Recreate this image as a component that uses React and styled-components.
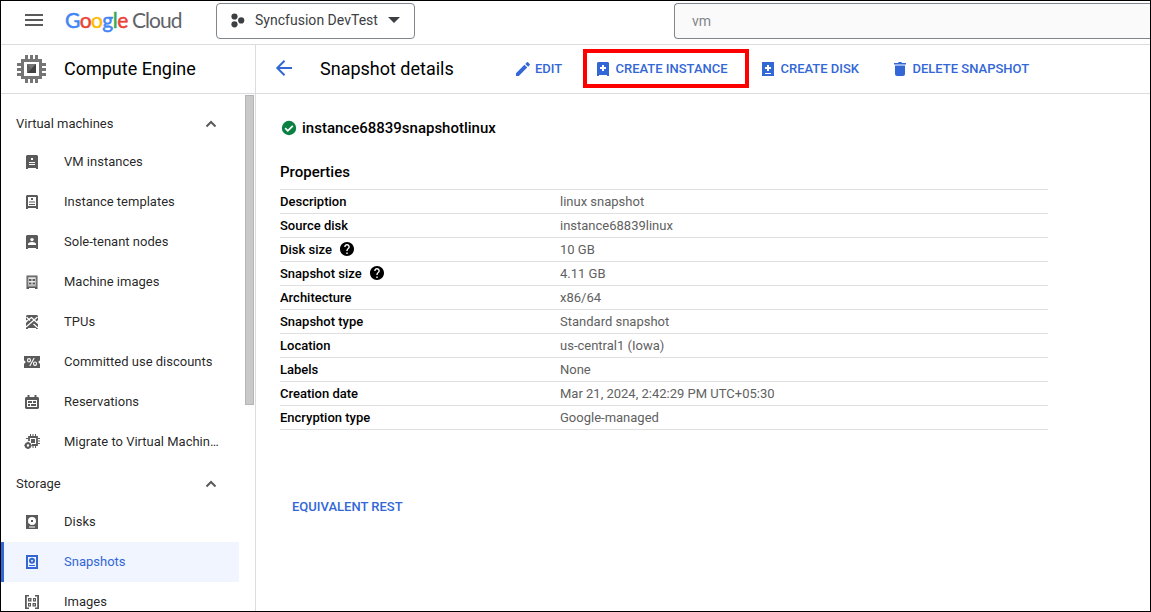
import React from "react";
import styled, { createGlobalStyle, css } from "styled-components";

const Global = createGlobalStyle`
  * { box-sizing: border-box; }
  body { margin: 0; background: #fff; }
`;

const BLUE = "#3367d6";
const LINE = "#dadce0";

const Frame = styled.div`
  width: 1151px;
  height: 612px;
  border: 1px solid #000;
  background: #fff;
  overflow: hidden;
  display: flex;
  flex-direction: column;
  font-family: Roboto, "Liberation Sans", sans-serif;
  color: rgba(0, 0, 0, 0.87);
  svg { display: block; flex: none; }
`;

const TopBar = styled.header`
  height: 44px;
  flex: none;
  display: flex;
  align-items: flex-start;
  border-bottom: 1px solid ${LINE};
`;

const MenuButton = styled.div`
  width: 18px;
  margin: 12px 0 0 24px;
`;

const Logo = styled.div`
  display: flex;
  width: 151px;
  margin: 4px 0 0 22px;
  font: 400 21px/30px Lato, sans-serif;
  white-space: pre;
`;

const Google = styled.span`
  width: 67px;
  letter-spacing: -0.55px;
  -webkit-text-stroke: 0.5px;
`;

const Cloud = styled.span`
  color: #5f6368;
  letter-spacing: -0.98px;
`;

const Letter = styled.span`
  color: ${(p) => p.$c};
`;

const ProjectPicker = styled.div`
  width: 199px;
  height: 36px;
  margin-top: 2px;
  padding: 0 14px 2px 12px;
  display: flex;
  align-items: center;
  border: 1px solid #80868b;
  border-radius: 4px;
  font-size: 14px;
  color: #3c4043;
`;

const ProjectName = styled.span`
  flex: 1;
  margin-left: 8px;
  letter-spacing: 0.02px;
`;

const Search = styled.div`
  flex: 1;
  height: 36px;
  margin: 2px 0 0 259px;
  padding: 0 17px;
  display: flex;
  align-items: center;
  background: #fafafa;
  border: 1px solid #80868b;
  border-right: 0;
  border-radius: 4px 0 0 4px;
  font-size: 14px;
  color: #80868b;
`;

const Body = styled.div`
  flex: 1;
  min-height: 0;
  display: flex;
`;

const Sidebar = styled.aside`
  width: 255px;
  flex: none;
  border-right: 1px solid ${LINE};
  display: flex;
  flex-direction: column;
`;

const Product = styled.div`
  height: 49px;
  flex: none;
  display: flex;
  align-items: center;
  gap: 17px;
  padding-left: 15px;
  border-bottom: 1px solid ${LINE};
  font-size: 18px;
  color: #000;
`;

const Raised = styled.span`
  padding-bottom: 2px;
`;

const NavScroll = styled.div`
  flex: 1;
  min-height: 0;
  display: flex;
  overflow: hidden;
`;

const NavList = styled.nav`
  width: 238px;
  padding-top: 8px;
  margin-right: 6px;
`;

const ScrollThumb = styled.div`
  width: 9px;
  height: 310px;
  margin-top: 1px;
  background: #c9c9c9;
  border: 1px solid #b4b4b4;
`;

const NavGroup = styled.div`
  height: 40px;
  padding: 3px 22px 0 15px;
  display: flex;
  align-items: center;
  justify-content: space-between;
  font-size: 13px;
`;

const NavItem = styled.div`
  height: 40px;
  display: flex;
  align-items: center;
  gap: 23px;
  padding-left: 22px;
  font-size: 13px;
  white-space: nowrap;
  svg { fill: #5a5a5a; stroke: none; color: #5a5a5a; }
  ${(p) => p.$active && css`
    padding-left: 19px;
    border-left: 3px solid ${BLUE};
    background: #f0f5ff;
    color: ${BLUE};
    svg { fill: ${BLUE}; color: ${BLUE}; }
  `}
`;

const Main = styled.main`
  flex: 1;
  min-width: 0;
`;

const Toolbar = styled.div`
  height: 49px;
  display: flex;
  align-items: center;
  border-bottom: 1px solid ${LINE};
`;

const BackButton = styled.div`
  width: 64px;
  padding: 0 0 2px 19px;
`;

const Title = styled.h1`
  width: 182px;
  margin: 0;
  padding-bottom: 2px;
  font-size: 18px;
  font-weight: 400;
  color: #000;
`;

const ToolButton = styled.div`
  width: ${(p) => p.$w}px;
  height: 39px;
  padding-left: ${(p) => p.$pad ?? 11}px;
  align-self: flex-start;
  margin-top: 4px;
  box-shadow: ${(p) => (p.$marked ? "inset 0 0 0 4px #f00" : "none")};
  display: flex;
  gap: ${(p) => p.$gap ?? 3.5}px;
  font-size: 13px;
  line-height: 40px;
  font-weight: 500;
  color: ${BLUE};
  white-space: nowrap;
  svg { fill: ${BLUE}; margin-top: 11px; }
`;

const Content = styled.div`
  padding: 24px 0 0 24px;
`;

const Name = styled.div`
  height: 20px;
  display: flex;
  align-items: center;
  gap: 5px;
  font-size: 15px;
  font-weight: 500;
  color: #000;
`;

const SectionTitle = styled.h2`
  margin: 24px 0 7px;
  font-size: 15px;
  line-height: 20px;
  font-weight: 500;
  color: #000;
`;

const Properties = styled.dl`
  width: 768px;
  margin: 0;
  border-bottom: 1px solid #e0e0e0;
`;

const Property = styled.div`
  height: 24px;
  display: flex;
  align-items: center;
  border-top: 1px solid #e0e0e0;
  font-size: 13px;
`;

const Term = styled.dt`
  width: 280px;
  height: 15px;
  display: flex;
  align-items: center;
  gap: 7px;
  line-height: 15px;
  font-weight: 500;
  color: #000;
  svg { margin-bottom: 1px; }
`;

const Value = styled.dd`
  margin: 0;
  color: #616161;
`;

const RestLink = styled.div`
  margin: 67px 0 0 12px;
  font-size: 13px;
  line-height: 20px;
  font-weight: 500;
  color: ${BLUE};
`;

const Icon = ({ children }) => (
  <svg width="18" height="18" viewBox="0 0 18 18">{children}</svg>
);

const SERVER = "M4 2h10l1 1v13h-2v-1H5v1H3V3z";

const icons = {
  vm: (
    <Icon>
      <path d={SERVER} />
      <path fill="#fff" d="M8 5h2v2H8zM6 9h6v1H6zM6 11h6v1H6z" />
    </Icon>
  ),
  template: (
    <Icon>
      <path fillRule="evenodd" d={SERVER + "M5 4v9h8V4z"} />
      <path d="M8 5h2v2H8zM6 8.500h6v1H6zM6 11h6v1H6z" />
    </Icon>
  ),
  sole: (
    <Icon>
      <path d={SERVER} />
      <circle cx="9" cy="6.600" r="1.700" fill="#fff" />
      <path fill="#fff" d="M5 12v-1c0-1.300 2-2 4-2s4 .7 4 2v1z" />
    </Icon>
  ),
  machine: (
    <Icon>
      <path d="M3.500 2.500h11V16h-2.500v-1H6v1H3.500z" />
      <path fill="#8a8a8a" d="M4.500 3.500h9v10.500h-9z" />
      <path fill="#eee" d="M5.500 4.500h7v8h-7z" />
      <path d="M6 6h2.500v2H6zM9.500 6H12v2H9.500zM6 9.500h2.500v2H6zM9.500 9.500H12v2H9.500z" />
    </Icon>
  ),
  tpu: (
    <Icon>
      <path d={SERVER} />
      <path d="M3 8.500 8.500 4.500 15 10.500M3.500 4l3.500 3.500M3 14 14.500 4M10.500 11l4.500 4" stroke="#fff" strokeWidth="1.200" fill="none" />
      <path fill="#fff" d="M3 7l1.500 1.500L3 10zM15 7l-1.500 1.500L15 10z" />
    </Icon>
  ),
  percent: (
    <Icon>
      <path d="M1 3h16v4.500a1.500 1.500 0 0 0 0 3V15H1v-4.500a1.500 1.500 0 0 0 0-3z" />
      <g fill="none" stroke="#fff" strokeWidth="1.100">
        <ellipse cx="6" cy="7.300" rx="1.500" ry="1.700" />
        <ellipse cx="12" cy="10.700" rx="1.500" ry="1.700" />
        <path d="M11.200 5 6.800 13" />
      </g>
    </Icon>
  ),
  calendar: (
    <Icon>
      <path fillRule="evenodd" d="M4.500 2h2v2h5V2h2v2H15l1 1v10l-1 1H3l-1-1V5l1-1h1.500zM4 7v7h10V7z" />
      <path d="M5 8h4v2H5zM10 8h3v2h-3zM5 11h2v2H5zM8 11h5v2H8z" />
    </Icon>
  ),
  migrate: (
    <Icon>
      <path d="M6 8V4h8v8H9" fill="none" stroke="currentColor" strokeWidth="1.800" />
      <path d="M8 6h4v4H8zM7 1h1v2H7zM9.500 1h1v2h-1zM12 1h1v2h-1zM15 5h2v1h-2zM15 7.500h2v1h-2zM15 10h2v1h-2zM9.500 13h1v2h-1zM12 13h1v2h-1zM3 5h2v1H3z" />
      <circle cx="5" cy="12.500" r="2.200" fill="none" stroke="currentColor" strokeWidth="2" />
      <path d="M4.300 8.800h1.400v1.500H4.300zM4.300 14.700h1.400V16H4.300zM1.300 11.800H3v1.400H1.300zM7 11.800h1.700v1.400H7z" />
    </Icon>
  ),
  disk: (
    <Icon>
      <path d="M3 2h12v14H3z" />
      <circle cx="9" cy="8" r="4" fill="#fff" />
      <path d="M8 7h2v2H8zM5 12l2-1.500v2z" />
      <path fill="#fff" d="M6 13.500h6v1H6z" />
    </Icon>
  ),
  snapshot: (
    <Icon>
      <path fillRule="evenodd" d="M3 2h12v14H3zM5 4v10h8V4z" />
      <path fillRule="evenodd" d="M9 4.700a3 3 0 1 1 0 6 3 3 0 0 1 0-6zM9 6.700a1 1 0 1 0 0 2 1 1 0 0 0 0-2z" />
      <path d="M6 12h6v1H6z" />
    </Icon>
  ),
  image: (
    <Icon>
      <path d="M2 2h4v1.500H3.800v11H6V16H2zM12 2h4v14h-4v-1.500h2.200v-11H12z" />
      <path fillRule="evenodd" d="M5 5h3.500v3.500H5zM6.200 6.200v1h1v-1zM10 5h3v3.500h-3zM11 6.200v1h1v-1zM5 10h3v3.500H5zM6 11.200v1h1v-1zM9.500 10H13v3.500H9.500zM10.800 11.200v1h1v-1z" />
    </Icon>
  ),
  edit: (
    <Icon>
      <path d="M2 13.200V16h2.800l8.400-8.400-2.800-2.800zM15.700 5.100a.8.8 0 0 0 0-1.100L14 2.300a.8.8 0 0 0-1.100 0l-1.600 1.600 2.800 2.800z" />
    </Icon>
  ),
  createInstance: (
    <Icon>
      <path d={SERVER} />
      <path fill="#fff" d="M8 5h2v2h2v2h-2v2H8V9H6V7h2z" />
    </Icon>
  ),
  createDisk: (
    <Icon>
      <path d="M3 2h12v14H3z" />
      <path fill="#fff" d="M8 5h2v2h2v2h-2v2H8V9H6V7h2zM6 13h6v1H6z" />
    </Icon>
  ),
  trash: (
    <Icon>
      <path d="M3 3h4l.7-1h2.600l.7 1h4v1.500H3zM4 5.500h10V14a2 2 0 0 1-2 2H6a2 2 0 0 1-2-2z" />
    </Icon>
  ),
};

const Chevron = () => (
  <svg width="12" height="8" viewBox="0 0 12 8">
    <path d="M1.500 6.500 6 2l4.500 4.500" fill="none" stroke="#5a5a5a" strokeWidth="2" />
  </svg>
);

const Help = () => (
  <svg width="16" height="16" viewBox="0 0 24 24">
    <path transform="translate(-.6 -.6) scale(1.05)" d="M12 2C6.480 2 2 6.480 2 12s4.480 10 10 10 10-4.480 10-10S17.520 2 12 2zm1 17h-2v-2h2v2zm2.070-7.750-.9.920C13.450 12.900 13 13.500 13 15h-2v-.5c0-1.100.45-2.100 1.170-2.830l1.240-1.260c.37-.36.59-.86.59-1.410 0-1.100-.9-2-2-2s-2 .9-2 2H8c0-2.210 1.790-4 4-4s4 1.790 4 4c0 .88-.36 1.680-.93 2.250z" />
  </svg>
);

const ComputeEngine = () => (
  <svg width="31" height="30" viewBox="0 0 31 30">
    <path
      fill="#757575"
      fillRule="evenodd"
      d="M5 5h21v20H5zM8 8v14h15V8z"
    />
    <path fill="#757575" d="M9 1h3v4H9zM14 1h3v4h-3zM19 1h3v4h-3zM9 25h3v4H9zM14 25h3v4h-3zM19 25h3v4h-3zM1 9h4v3H1zM1 14h4v3H1zM1 19h4v3H1zM26 9h4v3h-4zM26 14h4v3h-4zM26 19h4v3h-4z" />
    <path fill="#757575" d="M11 10h9v9h-9z" />
    <path fill="#424242" d="M20 10v9h-9z" />
    <path fill="#616161" d="M11 10l4.500 4.500L11 19z" />
  </svg>
);

const letters = [
  ["G", "#4285f4"], ["o", "#ea4335"], ["o", "#fbbc04"],
  ["g", "#4285f4"], ["l", "#34a853"], ["e", "#ea4335"],
];

const compute = [
  ["vm", "VM instances"],
  ["template", "Instance templates"],
  ["sole", "Sole-tenant nodes"],
  ["machine", "Machine images"],
  ["tpu", "TPUs"],
  ["percent", "Committed use discounts"],
  ["calendar", "Reservations"],
  ["migrate", "Migrate to Virtual Machin…"],
];

const storage = [
  ["disk", "Disks"],
  ["snapshot", "Snapshots", true],
  ["image", "Images"],
];

const properties = [
  ["Description", "linux snapshot"],
  ["Source disk", "instance68839linux"],
  ["Disk size", "10 GB", true],
  ["Snapshot size", "4.11 GB", true],
  ["Architecture", "x86/64"],
  ["Snapshot type", "Standard snapshot"],
  ["Location", "us-central1 (Iowa)"],
  ["Labels", "None"],
  ["Creation date", "Mar 21, 2024, 2:42:29 PM UTC+05:30"],
  ["Encryption type", "Google-managed"],
];

const NavSection = ({ title, items }) => (
  <>
    <NavGroup>{title}<Chevron /></NavGroup>
    {items.map(([icon, label, active]) => (
      <NavItem key={label} $active={active}>{icons[icon]}<Raised>{label}</Raised></NavItem>
    ))}
  </>
);

export default function App() {
  return (
    <Frame>
      <Global />
      <TopBar>
        <MenuButton>
          <svg width="18" height="13" viewBox="0 0 18 13">
            <path fill="#5a5a5a" d="M0 1h18v2H0zM0 6h18v2H0zM0 11h18v2H0z" />
          </svg>
        </MenuButton>
        <Logo>
          <Google>
            {letters.map(([ch, c], i) => <Letter key={i} $c={c}>{ch}</Letter>)}
          </Google>
          <Cloud>Cloud</Cloud>
        </Logo>
        <ProjectPicker>
          <svg width="18" height="18" viewBox="0 0 18 18" fill="#3c4043">
            <circle cx="5.500" cy="5.500" r="3.100" />
            <circle cx="5.500" cy="13.300" r="3.100" />
            <circle cx="12.200" cy="9.400" r="3.100" />
          </svg>
          <ProjectName>Syncfusion DevTest</ProjectName>
          <svg width="12" height="6" viewBox="0 0 12 6"><path fill="#3c4043" d="M0 0h12L6 6z" /></svg>
        </ProjectPicker>
        <Search>vm</Search>
      </TopBar>
      <Body>
        <Sidebar>
          <Product><ComputeEngine /><Raised>Compute Engine</Raised></Product>
          <NavScroll>
            <NavList>
              <NavSection title="Virtual machines" items={compute} />
              <NavSection title="Storage" items={storage} />
            </NavList>
            <ScrollThumb />
          </NavScroll>
        </Sidebar>
        <Main>
          <Toolbar>
            <BackButton>
              <svg width="18" height="18" viewBox="0 0 18 18">
                <path d="M17 9H2.500M9.500 1.800 2.300 9l7.200 7.200" fill="none" stroke={BLUE} strokeWidth="2" />
              </svg>
            </BackButton>
            <Title>Snapshot details</Title>
            <ToolButton $w={81} $pad={12} $gap={3}>{icons.edit}EDIT</ToolButton>
            <ToolButton $w={166} $marked>{icons.createInstance}CREATE INSTANCE</ToolButton>
            <ToolButton $w={131} $pad={10}>{icons.createDisk}CREATE DISK</ToolButton>
            <ToolButton $w={160}>{icons.trash}DELETE SNAPSHOT</ToolButton>
          </Toolbar>
          <Content>
            <Name>
              <svg width="17" height="16" viewBox="0 0 17 16">
                <circle cx="9" cy="8" r="7.200" fill="#0b8043" />
                <path d="M5.200 8.200 7.800 10.800 12.800 5.800" fill="none" stroke="#fff" strokeWidth="1.700" />
              </svg>
              instance68839snapshotlinux
            </Name>
            <SectionTitle>Properties</SectionTitle>
            <Properties>
              {properties.map(([term, value, help]) => (
                <Property key={term}>
                  <Term>{term}{help && <Help />}</Term>
                  <Value>{value}</Value>
                </Property>
              ))}
            </Properties>
            <RestLink>EQUIVALENT REST</RestLink>
          </Content>
        </Main>
      </Body>
    </Frame>
  );
}
